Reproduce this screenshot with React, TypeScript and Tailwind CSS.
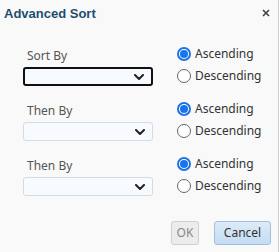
import React from "react";

function Chevron() {
  return (
    <svg width="10" height="6" viewBox="0 0 10 6" className="absolute right-[7px] top-1/2 -translate-y-1/2">
      <polyline points="1,1 5,5 9,1" fill="none" stroke="#222" strokeWidth="2" strokeLinecap="round" strokeLinejoin="round" />
    </svg>
  );
}

function Radio({ checked, label }: { checked: boolean; label: string }) {
  return (
    <div className="flex items-center h-[22px]">
      {checked ? (
        <span className="w-[14px] h-[14px] rounded-full border-[2px] border-[#1a73e8] flex items-center justify-center bg-white">
          <span className="w-[8px] h-[8px] rounded-full bg-[#1a73e8]" />
        </span>
      ) : (
        <span className="w-[14px] h-[14px] rounded-full border border-[#666] bg-white" />
      )}
      <span className="ml-[4px] text-[12px] text-[#333] leading-none">{label}</span>
    </div>
  );
}

function Group({ label, focused }: { label: string; focused?: boolean }) {
  return (
    <div className="flex">
      <div className="w-[130px] pt-[5px]">
        <div className="pl-[4px] h-[16px] text-[12px] leading-[16px] text-[#555]">{label}</div>
        <div
          className={
            "relative mt-[3px] h-[19px] rounded-[3px] bg-[#f7faff] " +
            (focused ? "border-2 border-[#111]" : "border border-[#d5dbe2]")
          }
        >
          <Chevron />
        </div>
      </div>
      <div className="ml-[24px]">
        <Radio checked label="Ascending" />
        <Radio checked={false} label="Descending" />
      </div>
    </div>
  );
}

export default function App() {
  return (
    <div
      className="w-[279px] h-[252px] bg-[#f9f9f9] border-r border-[#d0d0d0] flex flex-col"
      style={{ fontFamily: '"Noto Sans", sans-serif' }}
    >
      <div className="h-[28px] flex items-center justify-between pl-[4px] pr-[8px]">
        <span className="text-[13px] font-bold text-[#1d4f6e]" style={{ fontFamily: '"Liberation Sans", sans-serif' }}>
          Advanced Sort
        </span>
        <svg width="8" height="8" viewBox="0 0 8 8" className="mt-[-2px]">
          <path d="M1 1 L7 7 M7 1 L1 7" stroke="#444" strokeWidth="1.6" />
        </svg>
      </div>
      <div className="pl-[23px] mt-[15px] flex flex-col gap-[11px]">
        <Group label="Sort By" focused />
        <Group label="Then By" />
        <Group label="Then By" />
      </div>
      <div className="mt-[24px] flex justify-end gap-[15px] pr-[7px]">
        <button className="h-[24px] w-[28px] rounded-[3px] border border-[#d0d0d0] bg-[#ececec] text-[12px] text-[#888]">
          OK
        </button>
        <button className="h-[24px] w-[57px] rounded-[3px] border border-[#9ebfdd] bg-gradient-to-b from-[#dcebf8] to-[#c4dcf2] text-[12px] text-[#333]">
          Cancel
        </button>
      </div>
    </div>
  );
}
